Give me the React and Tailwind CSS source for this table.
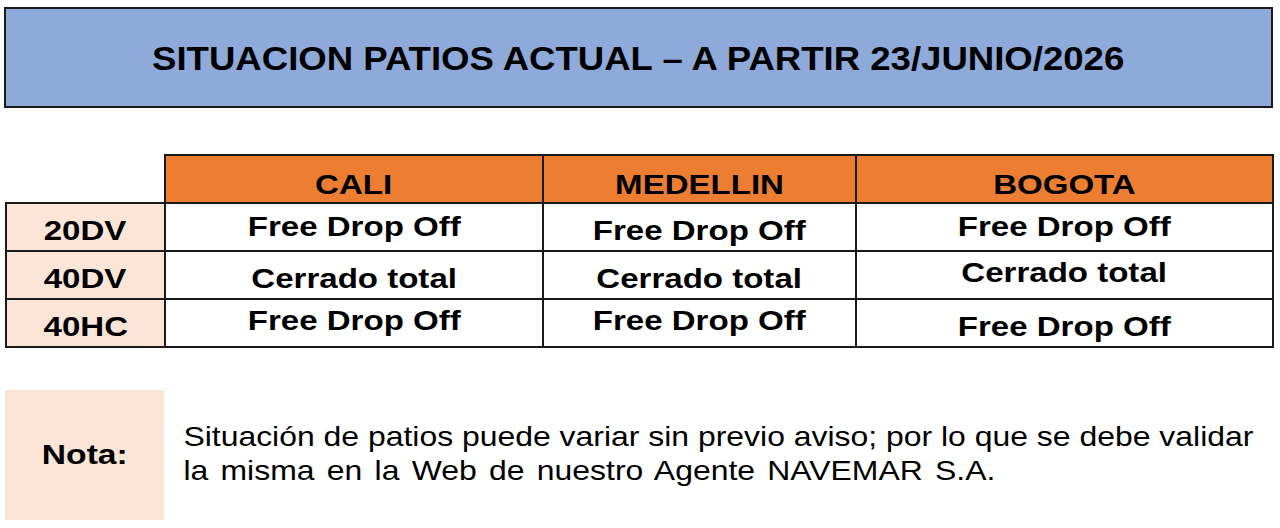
export default function App() {
  const rows = [
    { label: "20DV", cells: [["Free Drop Off", "pt-2 pb-2"], ["Free Drop Off", "pt-3 pb-1"], ["Free Drop Off", "pt-2 pb-2"]] },
    { label: "40DV", cells: [["Cerrado total", "pt-3 pb-1"], ["Cerrado total", "pt-3 pb-1"], ["Cerrado total", "pt-[6px] pb-[10px]"]] },
    { label: "40HC", cells: [["Free Drop Off", "pt-[6px] pb-[10px]"], ["Free Drop Off", "pt-[6px] pb-[10px]"], ["Free Drop Off", "pt-3 pb-1"]] },
  ];

  const Wide = ({ children }) => (
    <span className="inline-block scale-x-[1.18] whitespace-nowrap">{children}</span>
  );

  return (
    <div className="w-[1280px] h-[528px] bg-white overflow-hidden font-['Liberation_Sans',Arial,sans-serif] text-black">
      <div className="pt-[7px] pl-[4px] pr-[7px]">
        <div className="h-[101px] border-2 border-[#1a1a1a] bg-[#8eaadb] flex items-center justify-center">
          <h1 className="text-[34px] font-bold leading-none inline-block scale-x-[1.075] whitespace-nowrap">
            SITUACION PATIOS ACTUAL – A PARTIR 23/JUNIO/2026
          </h1>
        </div>
      </div>

      <div className="pl-[5px] pt-[46px]">
        <table className="border-collapse table-fixed w-[1267px]">
          <colgroup>
            <col className="w-[159px]" />
            <col className="w-[378px]" />
            <col className="w-[313px]" />
            <col className="w-[417px]" />
          </colgroup>
          <thead>
            <tr className="h-[48px]">
              <th className="p-0"></th>
              {["CALI", "MEDELLIN", "BOGOTA"].map((c) => (
                <th key={c} className="border-2 border-[#1a1a1a] bg-[#ed7d31] text-[28px] font-bold leading-none pt-3 pb-0">
                  <Wide>{c}</Wide>
                </th>
              ))}
            </tr>
          </thead>
          <tbody>
            {rows.map((r) => (
              <tr key={r.label} className="h-[48px]">
                <td className="border-2 border-[#1a1a1a] bg-[#fce4d6] text-center text-[28px] font-bold leading-none pt-2 pb-0">
                  <Wide>{r.label}</Wide>
                </td>
                {r.cells.map(([text, pad], i) => (
                  <td key={i} className={`border-2 border-[#1a1a1a] text-center text-[28px] font-bold leading-none ${pad}`}>
                    <Wide>{text}</Wide>
                  </td>
                ))}
              </tr>
            ))}
          </tbody>
        </table>
      </div>

      <div className="flex pl-[5px] pt-[42px]">
        <div className="w-[159px] h-[130px] bg-[#fce4d6] flex items-center justify-center">
          <span className="text-[28px] font-bold inline-block scale-x-[1.2]">Nota:</span>
        </div>
        <p className="pl-[17px] pt-[30px] text-[28px] leading-[34px] origin-left scale-x-[1.14]">
          Situación de patios puede variar sin previo aviso; por lo que se debe validar
          <br />
          <span className="[word-spacing:3px]">la misma en la Web de nuestro Agente NAVEMAR S.A.</span>
        </p>
      </div>
    </div>
  );
}
